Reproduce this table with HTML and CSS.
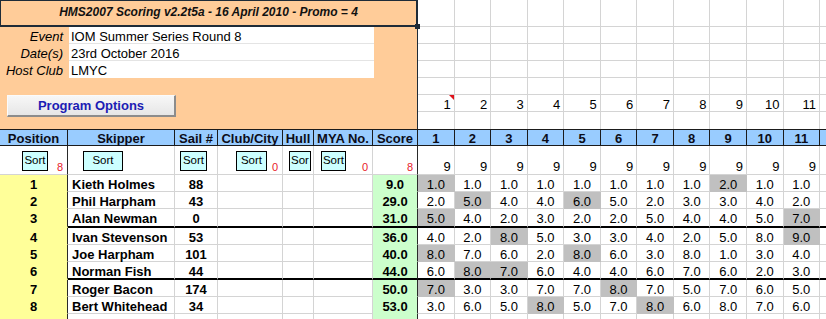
FILE: index.html
```html
<!DOCTYPE html>
<html>
<head>
<meta charset="utf-8">
<link rel="stylesheet" href="styles.css">
</head>
<body>
<table class="sheet">
<colgroup>
<col class="w-pos"><col class="w-skip"><col class="w-sail"><col class="w-club"><col class="w-hull"><col class="w-mya"><col class="w-score">
<col class="w-race"><col class="w-race"><col class="w-race"><col class="w-race"><col class="w-race"><col class="w-race"><col class="w-race"><col class="w-race"><col class="w-race"><col class="w-race"><col class="w-race">
<col class="w-rest">
</colgroup>
<tbody>
<tr class="r-title">
<td class="panel" colspan="7" rowspan="7">
<div class="title">HMS2007 Scoring v2.2t5a - 16 April 2010 - Promo = 4<span class="handle"></span></div>
<div class="info">
<span class="lbl">Event</span><span class="val">IOM Summer Series Round 8</span>
<span class="lbl">Date(s)</span><span class="val">23rd October 2016</span>
<span class="lbl">Host Club</span><span class="val">LMYC</span>
</div>
<button class="prog" type="button">Program Options</button>
</td>
<td></td><td></td><td></td><td></td><td></td><td></td><td></td><td></td><td></td><td></td><td></td><td></td>
</tr>
<tr><td></td><td></td><td></td><td></td><td></td><td></td><td></td><td></td><td></td><td></td><td></td><td></td></tr>
<tr><td></td><td></td><td></td><td></td><td></td><td></td><td></td><td></td><td></td><td></td><td></td><td></td></tr>
<tr><td></td><td></td><td></td><td></td><td></td><td></td><td></td><td></td><td></td><td></td><td></td><td></td></tr>
<tr><td></td><td></td><td></td><td></td><td></td><td></td><td></td><td></td><td></td><td></td><td></td><td></td></tr>
<tr class="r-nums"><td class="comment">1</td><td>2</td><td>3</td><td>4</td><td>5</td><td>6</td><td>7</td><td>8</td><td>9</td><td>10</td><td>11</td><td></td></tr>
<tr class="r-gap"><td></td><td></td><td></td><td></td><td></td><td></td><td></td><td></td><td></td><td></td><td></td><td></td></tr>

<tr class="r-head">
<td class="first">Position</td><td>Skipper</td><td>Sail #</td><td>Club/City</td><td>Hull</td><td>MYA No.</td><td>Score</td>
<td>1</td><td>2</td><td>3</td><td>4</td><td>5</td><td>6</td><td>7</td><td>8</td><td>9</td><td>10</td><td>11</td><td></td>
</tr>

<tr class="r-sort">
<td class="pos-s"><div class="sortwrap"><span class="sbtn sb-pos">Sort</span><span class="cnt">8</span></div></td>
<td><div class="sortwrap"><span class="sbtn sb-skip">Sort</span></div></td>
<td><div class="sortwrap"><span class="sbtn sb-sail">Sort</span></div></td>
<td><div class="sortwrap"><span class="sbtn sb-club">Sort</span><span class="cnt">0</span></div></td>
<td><div class="sortwrap"><span class="sbtn sb-hull">Sor</span></div></td>
<td><div class="sortwrap"><span class="sbtn sb-mya">Sort</span><span class="cnt">0</span></div></td>
<td class="score-s"><div class="sortwrap"><span class="cnt">8</span></div></td>
<td class="nine">9</td><td class="nine">9</td><td class="nine">9</td><td class="nine">9</td><td class="nine">9</td><td class="nine">9</td><td class="nine">9</td><td class="nine">9</td><td class="nine">9</td><td class="nine">9</td><td class="nine">9</td><td></td>
</tr>

<tr>
<td class="pos">1</td><td class="skip">Kieth Holmes</td><td class="sail">88</td><td></td><td></td><td></td><td class="score">9.0</td>
<td class="r hl">1.0</td><td class="r">1.0</td><td class="r">1.0</td><td class="r">1.0</td><td class="r">1.0</td><td class="r">1.0</td><td class="r">1.0</td><td class="r">1.0</td><td class="r hl">2.0</td><td class="r">1.0</td><td class="r">1.0</td><td></td>
</tr>
<tr>
<td class="pos">2</td><td class="skip">Phil Harpham</td><td class="sail">43</td><td></td><td></td><td></td><td class="score">29.0</td>
<td class="r">2.0</td><td class="r hl">5.0</td><td class="r">4.0</td><td class="r">4.0</td><td class="r hl">6.0</td><td class="r">5.0</td><td class="r">2.0</td><td class="r">3.0</td><td class="r">3.0</td><td class="r">4.0</td><td class="r">2.0</td><td></td>
</tr>
<tr class="sep">
<td class="pos">3</td><td class="skip">Alan Newman</td><td class="sail">0</td><td></td><td></td><td></td><td class="score">31.0</td>
<td class="r hl">5.0</td><td class="r">4.0</td><td class="r">2.0</td><td class="r">3.0</td><td class="r">2.0</td><td class="r">2.0</td><td class="r">5.0</td><td class="r">4.0</td><td class="r">4.0</td><td class="r">5.0</td><td class="r hl">7.0</td><td></td>
</tr>
<tr>
<td class="pos">4</td><td class="skip">Ivan Stevenson</td><td class="sail">53</td><td></td><td></td><td></td><td class="score">36.0</td>
<td class="r">4.0</td><td class="r">2.0</td><td class="r hl">8.0</td><td class="r">5.0</td><td class="r">3.0</td><td class="r">3.0</td><td class="r">4.0</td><td class="r">2.0</td><td class="r">5.0</td><td class="r">8.0</td><td class="r hl">9.0</td><td></td>
</tr>
<tr>
<td class="pos">5</td><td class="skip">Joe Harpham</td><td class="sail">101</td><td></td><td></td><td></td><td class="score">40.0</td>
<td class="r hl">8.0</td><td class="r">7.0</td><td class="r">6.0</td><td class="r">2.0</td><td class="r hl">8.0</td><td class="r">6.0</td><td class="r">3.0</td><td class="r">8.0</td><td class="r">1.0</td><td class="r">3.0</td><td class="r">4.0</td><td></td>
</tr>
<tr class="sep sep-short">
<td class="pos">6</td><td class="skip">Norman Fish</td><td class="sail">44</td><td></td><td></td><td></td><td class="score">44.0</td>
<td class="r">6.0</td><td class="r hl">8.0</td><td class="r hl">7.0</td><td class="r">6.0</td><td class="r">4.0</td><td class="r">4.0</td><td class="r">6.0</td><td class="r">7.0</td><td class="r">6.0</td><td class="r">2.0</td><td class="r">3.0</td><td></td>
</tr>
<tr>
<td class="pos">7</td><td class="skip">Roger Bacon</td><td class="sail">174</td><td></td><td></td><td></td><td class="score">50.0</td>
<td class="r hl">7.0</td><td class="r">3.0</td><td class="r">3.0</td><td class="r">7.0</td><td class="r">7.0</td><td class="r hl">8.0</td><td class="r">7.0</td><td class="r">5.0</td><td class="r">7.0</td><td class="r">6.0</td><td class="r">5.0</td><td></td>
</tr>
<tr>
<td class="pos">8</td><td class="skip">Bert Whitehead</td><td class="sail">34</td><td></td><td></td><td></td><td class="score">53.0</td>
<td class="r">3.0</td><td class="r">6.0</td><td class="r">5.0</td><td class="r hl">8.0</td><td class="r">5.0</td><td class="r">7.0</td><td class="r hl">8.0</td><td class="r">6.0</td><td class="r">8.0</td><td class="r">7.0</td><td class="r">6.0</td><td></td>
</tr>
<tr>
<td class="pos"></td><td></td><td></td><td></td><td></td><td></td><td class="score"></td>
<td></td><td></td><td></td><td></td><td></td><td></td><td></td><td></td><td></td><td></td><td></td><td></td>
</tr>
</tbody>
</table>
</body>
</html>
```
FILE: styles.css
```css
html, body {
  margin: 0;
  padding: 0;
  overflow: hidden;
  background: #ffffff;
}

body {
  font-family: "Liberation Sans", Arial, sans-serif;
  font-size: 13px;
  color: #000000;
}

.sheet {
  border-collapse: separate;
  border-spacing: 0;
  table-layout: fixed;
  width: 860px;
}

.w-pos { width: 68px; }
.w-skip { width: 107px; }
.w-sail { width: 43px; }
.w-club { width: 65px; }
.w-hull { width: 31px; }
.w-mya { width: 59px; }
.w-score { width: 45px; }
.w-race { width: 36.55px; }
.w-rest { width: 40px; }

.sheet td {
  padding: 3px 0 0 0;
  height: 17px;
  box-sizing: border-box;
  border-right: 1px solid #d4d4d4;
  border-bottom: 1px solid #d4d4d4;
  line-height: 13px;
  white-space: nowrap;
  vertical-align: top;
}

.sheet .r-title td { height: 27px; }

/* ---------- orange info panel ---------- */
.sheet td.panel {
  height: auto;
  padding: 0;
  background: #ffcc99;
  border-right: 1px solid #1e2b38;
  border-bottom: 0;
}

.title {
  position: relative;
  height: 27px;
  margin-right: -1px;
  box-sizing: border-box;
  border: 2px solid #1e2b38;
  border-top-width: 1px;
  border-left-width: 1px;
  font-size: 12px;
  font-weight: bold;
  font-style: italic;
  line-height: 23px;
  text-align: center;
  color: #111111;
}

.handle {
  position: absolute;
  right: -4px;
  bottom: -4px;
  width: 5px;
  height: 5px;
  background: #1e2b38;
  z-index: 2;
}

.info {
  display: grid;
  grid-template-columns: 69px 305px;
  grid-auto-rows: 17px;
}

.lbl,
.val {
  box-sizing: border-box;
  padding-top: 3px;
  line-height: 13px;
}

.lbl {
  font-style: italic;
  text-align: right;
  padding-right: 6px;
}

.val {
  background: #ffffff;
  padding-left: 2px;
  border-bottom: 1px solid #e4e4e4;
}

.val:last-child { border-bottom: 0; }

.prog {
  display: block;
  margin: 17px 0 0 7px;
  width: 169px;
  height: 22px;
  padding: 0;
  box-sizing: border-box;
  border-style: solid;
  border-width: 1px 2px 2px 1px;
  border-color: #fbfbfb #8c8c8c #8c8c8c #fbfbfb;
  background: linear-gradient(#f7f7f7, #e6e6e6);
  font-family: "Liberation Sans", Arial, sans-serif;
  font-size: 13px;
  font-weight: bold;
  color: #1c1cb4;
}

/* ---------- race numbers above the grid ---------- */
.sheet .r-nums td {
  text-align: right;
  padding-right: 3px;
}

.sheet td.comment { position: relative; }

.comment::after {
  content: "";
  position: absolute;
  top: 0;
  right: 0;
  border-top: 5px solid #e0121b;
  border-left: 5px solid transparent;
}

.sheet .r-gap td { border-bottom: 0; }

/* ---------- header row ---------- */
.sheet .r-head td {
  padding-top: 2px;
  background: #99ccff;
  border-top: 1px solid #1b1b1b;
  border-bottom: 1px solid #1b1b1b;
  border-right: 1px solid #1b1b1b;
  font-weight: bold;
  text-align: center;
  line-height: 13px;
  color: #0c0c18;
}

/* ---------- sort row ---------- */
.sheet .r-sort td {
  height: 29px;
  padding: 0;
  vertical-align: bottom;
}

.sortwrap {
  display: flex;
  height: 28px;
}

.sbtn {
  margin-top: 5px;
  height: 20px;
  box-sizing: border-box;
  border: 1px solid #000000;
  background: #ccffff;
  font-size: 11.5px;
  line-height: 17px;
  text-align: center;
  overflow: hidden;
}

.sb-pos { margin-left: 22px; width: 26px; }
.sb-skip { margin-left: 15px; width: 40px; }
.sb-sail { margin-left: 5px; width: 27px; }
.sb-club { margin-left: 18px; width: 31px; }
.sb-hull { margin-left: 6px; width: 22px; }
.sb-mya { margin-left: 7px; width: 25px; }

.cnt {
  margin-left: auto;
  align-self: flex-end;
  color: #e8202a;
  font-size: 11px;
  line-height: 13px;
  padding: 0 4px 0 0;
}

.sheet td.pos-s,
.sheet td.score-s { border-right-color: #2a2a2a; }

.sheet .r-sort td.nine {
  text-align: right;
  padding-right: 3px;
  line-height: 14px;
}

/* ---------- data rows ---------- */
.sheet td.pos {
  background: #ffff99;
  border-right-color: #2a2a2a;
  border-bottom-color: #ffff99;
  font-weight: bold;
  text-align: center;
}

.sheet td.skip {
  font-weight: bold;
  padding-left: 4px;
}

.sheet td.sail {
  font-weight: bold;
  text-align: center;
}

.sheet td.score {
  background: #ccffcc;
  border-right-color: #2a2a2a;
  border-bottom-color: #ccffcc;
  font-weight: bold;
  text-align: center;
}

.sheet td.r { text-align: center; }

.sheet td.hl {
  background: #c0c0c0;
  border-right-color: #c0c0c0;
  border-bottom-color: #c0c0c0;
}

.sheet .sep td {
  height: 19px;
  border-bottom: 2px solid #000000;
}

.sheet .sep-short td { height: 18px; }

.sheet .sep td.pos { border-bottom-color: #ffff99; }
```
